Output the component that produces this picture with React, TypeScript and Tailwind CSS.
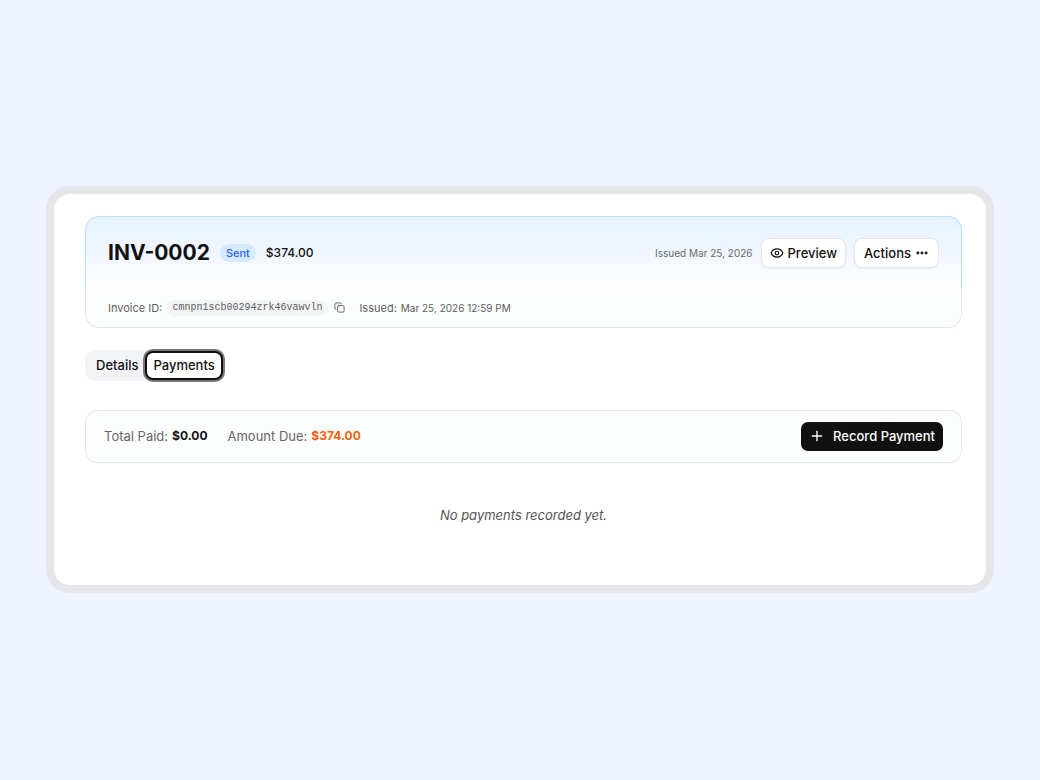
import { Copy, Ellipsis, Eye, Plus } from "lucide-react";

const INVOICE = {
  number: "INV-0002",
  status: "Sent",
  total: "$374.00",
  id: "cmnpn1scb00294zrk46vawvln",
  issued: "Mar 25, 2026",
  issuedAt: "Mar 25, 2026 12:59 PM",
};

const TOTALS = [
  { label: "Total Paid:", value: "$0.00", color: "text-[#111111]" },
  { label: "Amount Due:", value: "$374.00", color: "text-[#f5610a]" },
];

const OUTLINE_BUTTON =
  "flex h-[30px] items-center rounded-lg border border-[#e4e6eb] bg-white text-[13px] leading-5 font-medium shadow-xs";

function InvoiceHeader() {
  return (
    <header>
      {/* the tinted part keeps its own border colour, the meta row below is plain grey */}
      <div className="flex h-[73px] items-center justify-between rounded-t-[14px] border border-b-0 border-[#b8dfff] bg-linear-to-b from-[#e6f2ff] via-[#f1f6ff] to-white px-[22px]">
        <div className="flex items-center">
          <h1 className="text-[21px] leading-[30px] font-bold">{INVOICE.number}</h1>
          <span className="ml-2.5 rounded-full bg-[#d3eaff] px-1.5 text-[11px] leading-[18px] font-medium text-[#2b5ff5]">
            {INVOICE.status}
          </span>
          <span className="ml-2.5 text-xs leading-5 font-medium">{INVOICE.total}</span>
        </div>
        <div className="flex items-center gap-2">
          <span className="text-[10px] leading-4 text-[#6b6b6b]">Issued {INVOICE.issued}</span>
          <button type="button" className={`${OUTLINE_BUTTON} gap-1 px-2`}>
            <Eye size={14} />
            Preview
          </button>
          <button type="button" className={`${OUTLINE_BUTTON} gap-1 px-[9px]`}>
            Actions
            <Ellipsis size={14} strokeWidth={3} />
          </button>
        </div>
      </div>
      <div className="flex h-[39px] items-center rounded-b-[14px] border border-t-0 border-[#e3e6e8] bg-[#fcfefe] px-[22px] text-[11px] leading-4 text-[#5f5f5f]">
        <span>Invoice ID:</span>
        <code className="ml-1 rounded-full bg-[#f3f4f6] px-1.5 font-['Liberation_Mono',monospace] text-[10px] leading-4">
          {INVOICE.id}
        </code>
        <button type="button" aria-label="Copy invoice ID" className="ml-1.5">
          <Copy size={11} />
        </button>
        <span className="ml-3.5">Issued:</span>
        <span className="ml-1 text-[10px]">{INVOICE.issuedAt}</span>
      </div>
    </header>
  );
}

function Tabs() {
  return (
    <div role="tablist" className="mt-[22px] flex h-[31px] w-fit rounded-[10px] bg-[#f1f3f7] text-[13px] leading-5 font-medium">
      <button type="button" role="tab" aria-selected="false" className="pr-1.5 pl-[11px]">
        Details
      </button>
      <button
        type="button"
        role="tab"
        aria-selected="true"
        className="rounded-[9px] border-3 border-[#111111] bg-white px-1.5 outline-2 -outline-offset-1 outline-[#777777]"
      >
        Payments
      </button>
    </div>
  );
}

function PaymentSummary() {
  return (
    <section className="mt-[29px] flex h-[53px] items-center justify-between rounded-xl border border-[#e3e6e8] bg-[#fcfefe] px-[18px] text-[13px] leading-5">
      <div className="flex gap-5">
        {TOTALS.map((t) => (
          <p key={t.label} className="flex gap-1 text-[#666666]">
            {t.label}
            <b className={`text-xs leading-5 font-bold ${t.color}`}>{t.value}</b>
          </p>
        ))}
      </div>
      <button
        type="button"
        className="flex h-[29px] items-center gap-2 rounded-[7px] bg-[#111111] px-2 font-medium text-white"
      >
        <Plus size={16} />
        Record Payment
      </button>
    </section>
  );
}

export default function App() {
  return (
    <div className="flex min-h-screen items-center bg-[#eef3ff] px-[46px] pb-0.5 font-['Inter',sans-serif] text-[#111111]">
      <main className="w-full rounded-3xl border-8 border-[#e5e6ea] bg-white pt-[22px] pr-6 pb-[60px] pl-[31px]">
        <InvoiceHeader />
        <Tabs />
        <PaymentSummary />
        <p className="mt-[42px] text-center text-[13px] leading-5 text-[#555555] italic">No payments recorded yet.</p>
      </main>
    </div>
  );
}
